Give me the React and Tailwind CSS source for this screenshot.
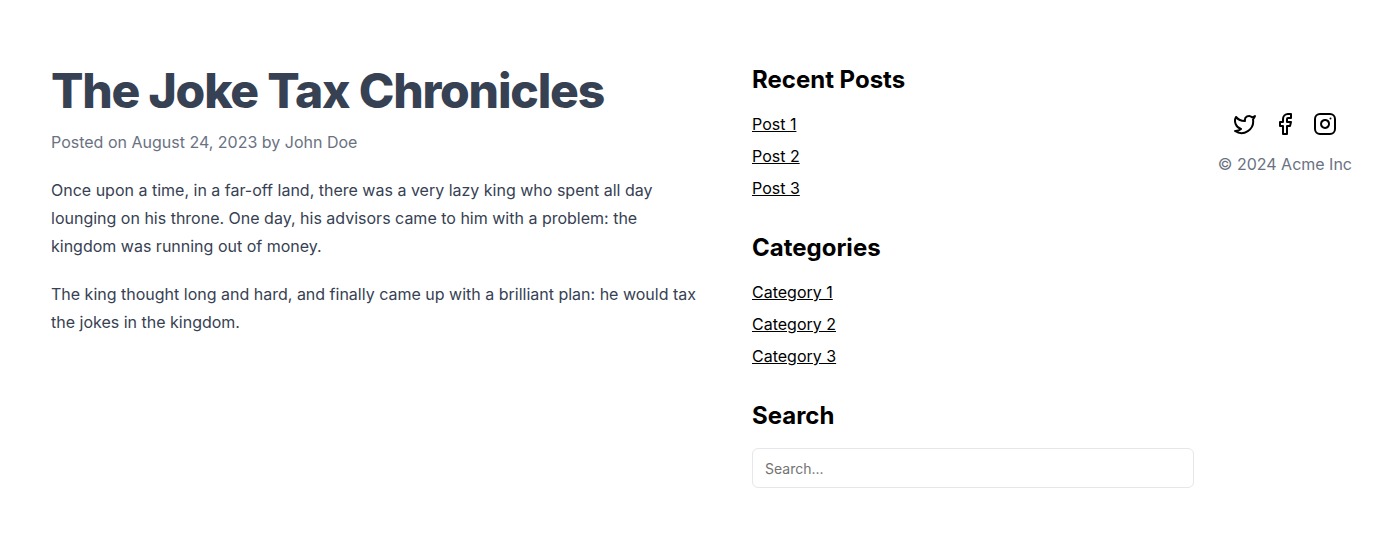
import { Twitter, Facebook, Instagram } from "lucide-react";

const sections = [
  { title: "Recent Posts", links: ["Post 1", "Post 2", "Post 3"] },
  { title: "Categories", links: ["Category 1", "Category 2", "Category 3"] },
];

const socials = [
  { label: "Twitter", Icon: Twitter },
  { label: "Facebook", Icon: Facebook },
  { label: "Instagram", Icon: Instagram },
];

function Article() {
  return (
    <article className="max-w-[653px] min-w-0 flex-[3] leading-7 text-gray-700">
      <h1 className="text-5xl leading-[54px] font-extrabold tracking-tight">The Joke Tax Chronicles</h1>
      <p className="mt-2.5 text-gray-500">Posted on August 24, 2023 by John Doe</p>
      <p className="mt-5">
        Once upon a time, in a far-off land, there was a very lazy king who spent all day lounging on his throne. One
        day, his advisors came to him with a problem: the kingdom was running out of money.
      </p>
      <p className="mt-5">
        The king thought long and hard, and finally came up with a brilliant plan: he would tax the jokes in the
        kingdom.
      </p>
    </article>
  );
}

function Sidebar() {
  return (
    <aside className="flex min-w-0 flex-[2] flex-col gap-8">
      {sections.map(({ title, links }) => (
        <section key={title}>
          <h2 className="text-2xl font-bold">{title}</h2>
          <ul className="mt-4 flex flex-col gap-2">
            {links.map((link) => (
              <li key={link}>
                <a href="#" className="underline">{link}</a>
              </li>
            ))}
          </ul>
        </section>
      ))}
      <section>
        <h2 className="text-2xl font-bold">
          <label htmlFor="search">Search</label>
        </h2>
        <input
          id="search"
          type="search"
          placeholder="Search..."
          className="mt-4 block h-10 w-full rounded-md border border-gray-200 bg-white px-3 py-2 text-sm placeholder:text-[#737373]"
        />
      </section>
    </aside>
  );
}

export default function App() {
  return (
    <div className="flex bg-white font-['Inter',sans-serif] text-black">
      <main className="flex min-w-0 flex-1 gap-12 py-16 pr-6 pl-[51px]">
        <Article />
        <Sidebar />
      </main>
      <footer className="flex shrink-0 flex-col items-center gap-4 pt-28 pr-6">
        <div className="flex gap-4">
          {socials.map(({ label, Icon }) => (
            <a key={label} href="#" aria-label={label}>
              <Icon className="size-6" />
            </a>
          ))}
        </div>
        <p className="text-gray-500">© 2024 Acme Inc</p>
      </footer>
    </div>
  );
}
